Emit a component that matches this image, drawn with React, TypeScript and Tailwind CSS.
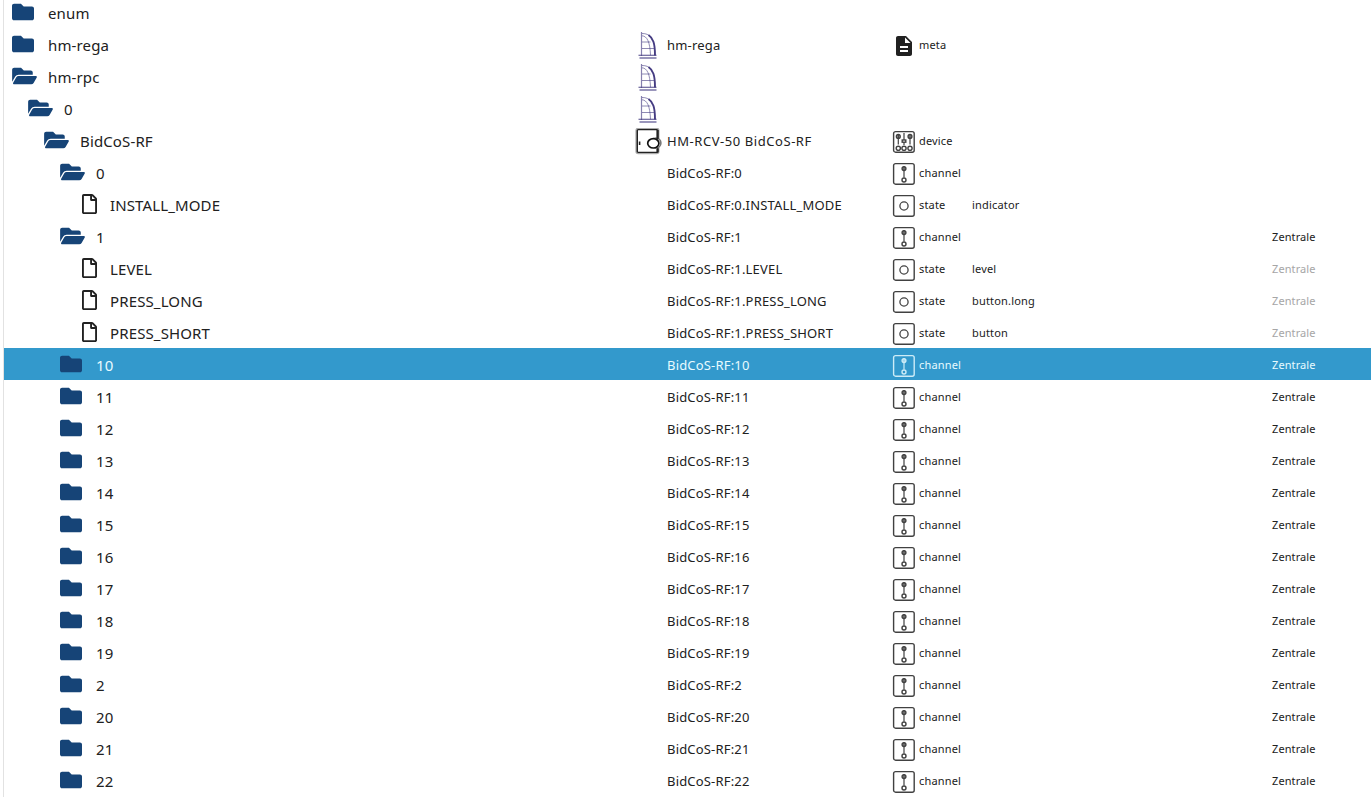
import clsx from "clsx";
import { FaFolder, FaFolderOpen, FaRegFile } from "react-icons/fa";
import { MdDescription } from "react-icons/md";

type Kind = "meta" | "device" | "channel" | "state";

interface TreeRow {
  label: string;
  icon: "folder" | "open" | "file";
  indent: string;
  logo?: "sail" | "door";
  name?: string;
  kind?: Kind;
  role?: string;
  room?: string;
  inherited?: boolean;
  selected?: boolean;
}

const channel = (n: string): TreeRow => ({
  label: n,
  icon: "folder",
  indent: "pl-14",
  name: `BidCoS-RF:${n}`,
  kind: "channel",
  room: "Zentrale",
});

const state = (label: string, parent: string, role: string): TreeRow => ({
  label,
  icon: "file",
  indent: "pl-[78px]",
  name: `BidCoS-RF:${parent}.${label}`,
  kind: "state",
  role,
});

const rows: TreeRow[] = [
  { label: "enum", icon: "folder", indent: "pl-2" },
  { label: "hm-rega", icon: "folder", indent: "pl-2", logo: "sail", name: "hm-rega", kind: "meta" },
  { label: "hm-rpc", icon: "open", indent: "pl-2", logo: "sail" },
  { label: "0", icon: "open", indent: "pl-6", logo: "sail" },
  { label: "BidCoS-RF", icon: "open", indent: "pl-10", logo: "door", name: "HM-RCV-50 BidCoS-RF", kind: "device" },
  { ...channel("0"), icon: "open", room: undefined },
  state("INSTALL_MODE", "0", "indicator"),
  { ...channel("1"), icon: "open" },
  { ...state("LEVEL", "1", "level"), room: "Zentrale", inherited: true },
  { ...state("PRESS_LONG", "1", "button.long"), room: "Zentrale", inherited: true },
  { ...state("PRESS_SHORT", "1", "button"), room: "Zentrale", inherited: true },
  { ...channel("10"), selected: true },
  ...["11", "12", "13", "14", "15", "16", "17", "18", "19", "2", "20", "21", "22"].map(channel),
];

function SailLogo() {
  return (
    <svg width="20" height="28" viewBox="0 0 20 28" fill="none" stroke="#453c82">
      <path d="M3.5 0v24" strokeWidth="1.2" opacity=".65" />
      <path d="M4 1.5c4 0 7 1 9 4" strokeWidth="1" opacity=".6" />
      <path d="M10.5 3c4.500 3 6.500 8 6.500 20.500" strokeWidth="1.9" />
      <path d="M4 3.800c5 .2 8 6 8.500 19.500" strokeWidth=".9" opacity=".65" />
      <path d="M4 10h8.500M4 16.500h12.500" strokeWidth="1" opacity=".6" />
      <path d="M.5 23.300h18" strokeWidth="1.200" opacity=".8" />
      <path d="M1.500 26h17" strokeWidth="1.800" opacity=".6" />
    </svg>
  );
}

function DoorLogo() {
  return (
    <svg width="28" height="28" viewBox="0 0 28 28" fill="white">
      <rect x="1.7" y="1" width="21.5" height="24" rx="1.5" stroke="#aaa" strokeWidth="2.6" />
      <rect x="2.3" y="1.6" width="20.4" height="22.8" rx="1" stroke="#222" strokeWidth="1.4" />
      <circle cx="21" cy="15" r="4.9" stroke="#777" strokeWidth="1.6" />
      <path d="M22.5 2v9m0 9.500v4" stroke="#222" strokeWidth="2.200" />
      <ellipse cx="18.300" cy="15.300" rx="5.600" ry="4.700" stroke="#111" strokeWidth="1.700" />
      <path d="M4.600 13.500v3.500" stroke="#222" strokeWidth="1.600" />
    </svg>
  );
}

function KindIcon({ kind }: { kind: Kind }) {
  if (kind === "meta") return <MdDescription size={24} />;
  return (
    <svg width="24" height="24" viewBox="0 0 24 24" fill="none" stroke="currentColor" strokeWidth="1.4" opacity=".85">
      <rect x="1.6" y="1.6" width="20.6" height="20.6" rx="2" />
      {kind === "state" && <circle cx="12" cy="12" r="4.1" strokeWidth="1.3" />}
      {kind === "channel" && (
        <>
          <path d="M12 4v11.500" strokeWidth="1.2" />
          <circle cx="12" cy="6.600" r="1.900" fill="currentColor" fillOpacity=".4" />
          <circle cx="12" cy="18" r="2" />
        </>
      )}
      {kind === "device" && (
        <>
          <path d="M6.300 4v10.500M12 3v12M18 4v10.500" strokeWidth="1.2" />
          <circle cx="6.300" cy="6.400" r="1.900" fill="currentColor" fillOpacity=".4" />
          <circle cx="18" cy="6.400" r="1.900" fill="currentColor" fillOpacity=".4" />
          <rect x="10.200" y="10" width="3.600" height="2.200" fill="white" />
          <circle cx="6.300" cy="18.300" r="2.100" />
          <circle cx="12" cy="18.300" r="2.100" />
          <circle cx="18" cy="18.300" r="2.100" />
        </>
      )}
    </svg>
  );
}

function Row({ row }: { row: TreeRow }) {
  return (
    <div
      className={clsx(
        "flex h-8 shrink-0 items-center whitespace-nowrap",
        row.selected ? "bg-[#3399cc] text-[#e8fbff]" : "text-[#212121]"
      )}
    >
      <div className={clsx("flex w-[631px] shrink-0 items-center", row.indent)}>
        <span className={clsx("shrink-0 text-[#164477]", row.icon === "file" ? "w-7" : "w-9")}>
          {row.icon === "folder" && <FaFolder size={22} />}
          {row.icon === "open" && <FaFolderOpen className="h-[22px] w-[25px]" />}
          {row.icon === "file" && <FaRegFile className="h-5 w-[15px] text-[#212121]" />}
        </span>
        <span className="pt-0.5 text-[15px] leading-5 tracking-[0.13px]">{row.label}</span>
      </div>
      <div className="flex w-8 shrink-0 items-center pt-1">
        {row.logo === "sail" && <span className="pl-[3px]"><SailLogo /></span>}
        {row.logo === "door" && <DoorLogo />}
      </div>
      <div
        className={clsx(
          "w-[225px] shrink-0 pt-0.5 text-[13px] leading-5",
          row.kind === "device" ? "tracking-[0.56px]" : "tracking-[0.18px]"
        )}
      >
        {row.name}
      </div>
      <div className="flex w-20 shrink-0 items-center gap-[3px]">
        {row.kind && (
          <>
            <span className="shrink-0 pt-1"><KindIcon kind={row.kind} /></span>
            <span className="pt-px text-[11px] leading-4 tracking-[0.16px]">{row.kind}</span>
          </>
        )}
      </div>
      <div className="w-[300px] shrink-0 pt-px text-[11px] leading-4 tracking-[0.18px]">{row.role}</div>
      <div className={clsx("pt-px text-[11px] leading-4 tracking-[0.1px]", row.inherited && "text-[#a6a6a6]")}>
        {row.room}
      </div>
    </div>
  );
}

export default function App() {
  return (
    <div className="h-screen overflow-hidden bg-white pl-[3px] font-['Noto_Sans',sans-serif]">
      <div className="h-full overflow-hidden border-l border-[#e2e2e2]">
        <div className="-mt-1 flex flex-col">
          {rows.map((row, i) => (
            <Row key={i} row={row} />
          ))}
        </div>
      </div>
    </div>
  );
}
